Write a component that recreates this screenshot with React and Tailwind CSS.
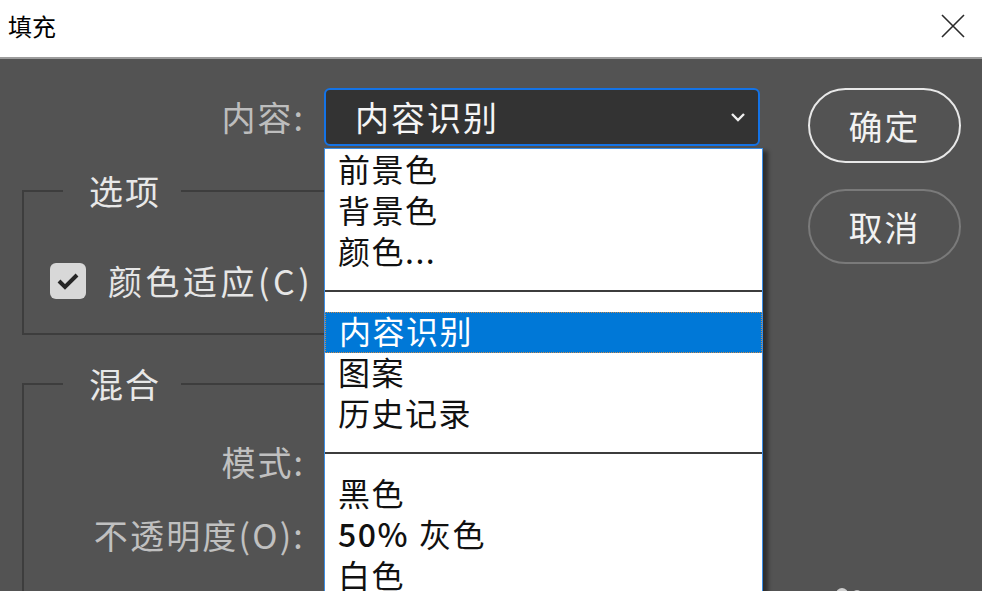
import React from "react";

const FONT = { fontFamily: '"Noto Sans CJK SC", "Noto Sans", sans-serif' };

function ListRow({ children, active }) {
  return (
    <div
      className={
        "h-[41px] flex items-center pb-[6px] pl-[13px] text-[32px] leading-none tracking-[1.5px] " +
        (active
          ? "bg-[#0078d7] text-white border border-dotted border-[#c98a4b] pl-[12px]"
          : "text-[#111]")
      }
    >
      {children}
    </div>
  );
}

function Sep() {
  return (
    <div className="pt-[17px] pb-[20px]">
      <div className="h-[2px] bg-[#3c3c3c]" />
    </div>
  );
}

export default function App() {
  return (
    <div className="w-[982px] h-[591px] overflow-hidden flex flex-col bg-[#535353]" style={FONT}>
      {/* title bar */}
      <div className="h-[59px] shrink-0 bg-white border-b-2 border-[#9c9c9c] flex items-center justify-between pl-[8px] pr-[17px]">
        <span className="text-[24px] leading-none text-black -mt-[6px]">填充</span>
        <svg width="24" height="24" viewBox="0 0 24 24" className="-mt-[5px]">
          <path d="M1 1 L23 23 M23 1 L1 23" stroke="#2b2b2b" strokeWidth="1.6" fill="none" />
        </svg>
      </div>

      {/* body */}
      <div className="relative flex-1 flex">
        {/* left column */}
        <div className="w-[760px] pl-[22px] pt-[29px] flex flex-col">
          <div className="flex items-center">
            <div className="w-[283px] text-right text-[34px] tracking-[2px] leading-none text-[#bdbdbd]">
              内容:
            </div>
            <div className="ml-[19px] w-[436px] h-[58px] rounded-[6px] border-2 border-[#1473e6] bg-[#333333] flex items-center justify-between pl-[29px] pr-[12px]">
              <span className="text-[34px] tracking-[2px] leading-none text-[#f5f5f5]">内容识别</span>
              <svg width="16" height="10" viewBox="0 0 16 10">
                <path d="M2 2 L8 8 L14 2" stroke="#f0f0f0" strokeWidth="2.4" fill="none" />
              </svg>
            </div>
          </div>

          {/* 选项 */}
          <fieldset className="mt-[25px] border-2 border-[#3d3d3d] p-0 m-0">
            <legend className="ml-[39px] pl-[26px] pr-[20px] text-[34px] tracking-[2px] leading-[40px] text-[#e8e8e8]">
              选项
            </legend>
            <div className="pt-[52px] pb-[34px] pl-[26px] flex items-center">
              <div className="w-[36px] h-[36px] rounded-[6px] bg-[#d8d8d8] flex items-center justify-center">
                <svg width="24" height="20" viewBox="0 0 24 20">
                  <path d="M3 10 L9 16 L21 4" stroke="#262626" strokeWidth="4" fill="none" />
                </svg>
              </div>
              <span className="ml-[22px] text-[34px] tracking-[3.5px] leading-none text-[#e6e6e6]">
                颜色适应(C)
              </span>
            </div>
          </fieldset>

          {/* 混合 */}
          <fieldset className="mt-[29px] border-2 border-[#3d3d3d] p-0 m-0 flex-1">
            <legend className="ml-[39px] pl-[26px] pr-[20px] text-[34px] tracking-[2px] leading-[40px] text-[#e8e8e8]">
              混合
            </legend>
            <div className="pt-[38px] flex flex-col gap-[33px]">
              <div className="w-[281px] text-right text-[34px] tracking-[2px] leading-[40px] text-[#c0c0c0]">
                模式:
              </div>
              <div className="w-[281px] text-right text-[34px] tracking-[2.2px] leading-[40px] text-[#c0c0c0]">
                不透明度(O):
              </div>
            </div>
          </fieldset>
        </div>

        {/* right column */}
        <div className="ml-[48px] pt-[29px] flex flex-col">
          <div className="w-[153px] h-[75px] rounded-full border-2 border-[#e8e8e8] flex items-center justify-center text-[34px] tracking-[2px] leading-none text-[#f2f2f2]">
            确定
          </div>
          <div className="mt-[26px] w-[153px] h-[75px] rounded-full border-2 border-[#7a7a7a] flex items-center justify-center text-[34px] tracking-[2px] leading-none text-[#f2f2f2]">
            取消
          </div>
          <svg width="40" height="20" viewBox="0 0 40 20" className="mt-[322px] ml-[27px] shrink-0">
            <circle cx="7" cy="8" r="6" fill="#cfcfcf" />
            <circle cx="22" cy="9" r="5" fill="#bdbdbd" />
          </svg>
        </div>

        {/* open dropdown list */}
        <div className="absolute left-[324px] top-[89px] w-[439px] h-[470px] bg-white border border-[#3a8ee6] pt-[1px] shadow-[5px_3px_4px_rgba(0,0,0,0.45)]">
          <ListRow>前景色</ListRow>
          <ListRow>背景色</ListRow>
          <ListRow>颜色...</ListRow>
          <Sep />
          <ListRow active>内容识别</ListRow>
          <ListRow>图案</ListRow>
          <ListRow>历史记录</ListRow>
          <Sep />
          <ListRow>黑色</ListRow>
          <ListRow>
            <span className="font-medium">50%</span>
            <span className="ml-[10px]">灰色</span>
          </ListRow>
          <ListRow>白色</ListRow>
        </div>
      </div>
    </div>
  );
}
